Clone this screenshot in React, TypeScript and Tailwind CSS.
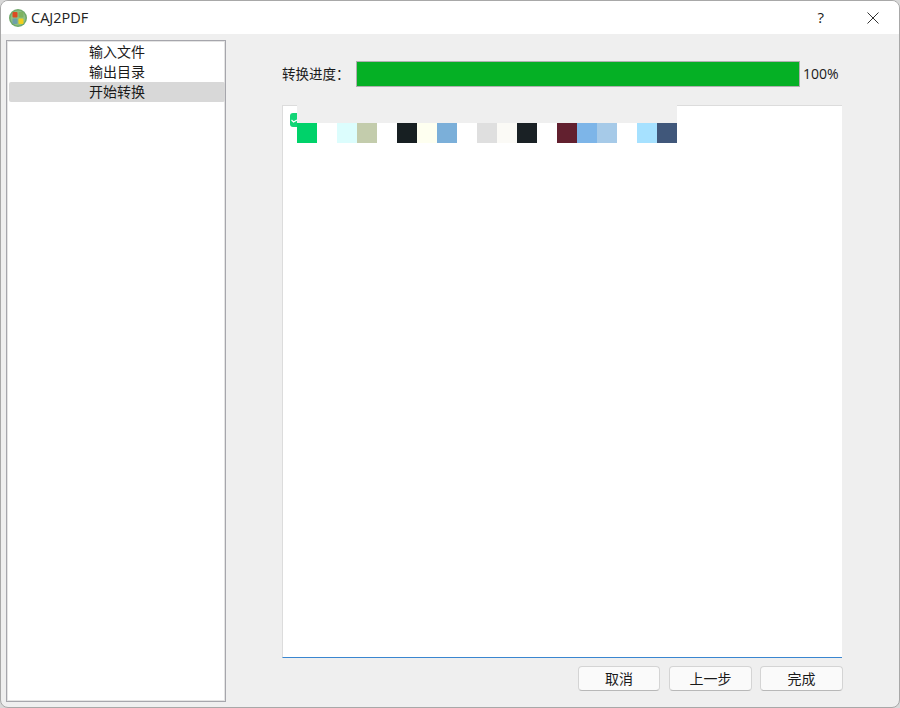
const navItems = ['输入文件', '输出目录', '开始转换']

const swatches = [
  'bg-[#00d26a]', 'bg-white', 'bg-[#dcfdfd]', 'bg-[#c3ccac]', 'bg-white',
  'bg-[#171f22]', 'bg-[#fefff0]', 'bg-[#7bafd9]', 'bg-white', 'bg-[#dfdfdf]',
  'bg-[#fbfaf6]', 'bg-[#1a2125]', 'bg-white', 'bg-[#62202f]', 'bg-[#7db5e8]',
  'bg-[#a6cae8]', 'bg-white', 'bg-[#a6e1ff]', 'bg-[#40577a]',
]

function AppIcon() {
  return (
    <svg width="18" height="18" viewBox="0 0 18 18" className="shrink-0">
      <circle cx="9" cy="9" r="9" fill="#6fa86a" />
      <circle cx="9" cy="9" r="7.5" fill="#8fbf84" />
      <rect x="3.5" y="3" width="5" height="5.5" rx="1" fill="#dd4a22" />
      <rect x="9.5" y="3" width="5" height="5.5" rx="1" fill="#7db35f" />
      <rect x="3.5" y="9.5" width="5" height="5.5" rx="1" fill="#6fa0a8" />
      <rect x="9.5" y="9.5" width="5" height="5.5" rx="1" fill="#f2cf1d" />
    </svg>
  )
}

export default function App() {
  return (
    <div className="w-[900px] h-[708px] overflow-hidden bg-[#d8d8d8] font-['Open_Sans','Noto_Sans_CJK_SC',sans-serif] text-[14px] text-[#1a1a1a]">
      <div className="w-[900px] h-[708px] flex flex-col rounded-lg overflow-hidden border border-[#a8a8a8] bg-[#efefef]">
        <header className="h-[33px] shrink-0 bg-white flex items-center pl-2">
          <AppIcon />
          <span className="ml-1 text-[14.5px] text-[#222]">CAJ2PDF</span>
          <span className="ml-auto mr-[43px] text-[15px]">?</span>
          <svg width="12" height="12" viewBox="0 0 12 12" className="mr-5">
            <path d="M.5.5l11 11M11.5.5l-11 11" stroke="#333" strokeWidth="1" fill="none" />
          </svg>
        </header>

        <div className="flex">
          <aside className="w-[220px] h-[662px] ml-[5px] mt-[6px] shrink-0 bg-white border border-[#a6a6ac] shadow-[inset_0_0_0_1px_#e4e4e4] pl-[2px] pt-[1px]">
            {navItems.map((item, i) => (
              <div key={item} className={`h-5 pb-px flex items-center justify-center rounded-[2px] ${i === 2 ? 'bg-[#d8d8d8]' : ''}`}>
                {item}
              </div>
            ))}
          </aside>

          <main className="ml-[56px] w-[561px] flex flex-col">
            <div className="mt-[27px] h-[26px] flex items-center">
              <span className="w-[74px] shrink-0 text-[13.5px]">转换进度：</span>
              <div className="w-[444px] h-[26px] bg-[#05b025] border border-[#b0b0b0]" />
              <span className="ml-[3px] pb-px">100%</span>
            </div>

            <div className="relative mt-[18px] w-[560px] h-[553px] bg-white border-t border-t-[#dcdcdc] border-l border-l-[#dcdcdc] border-b border-b-[#3a86d0]">
              <div className="-mt-px ml-[14px] w-[380px] h-[18px] bg-[#efefef]" />
              <div className="ml-[14px] flex">
                {swatches.map((color, i) => (
                  <div key={i} className={`w-5 h-5 ${color}`} />
                ))}
              </div>
              <div className="absolute left-[7px] top-[7px] w-[7px] h-[14px] bg-[#12d576] rounded-l-[3px] overflow-hidden">
                <svg width="7" height="14" viewBox="0 0 7 14">
                  <path d="M1.5 7l2 2 3.5-2" stroke="#fff" strokeWidth="1.2" fill="none" />
                </svg>
              </div>
            </div>

            <div className="mt-2 w-[561px] flex justify-end">
              <button className="w-[82px] h-[25px] pb-px rounded bg-[#fafafa] border border-[#d4d4d4] border-b-[#b8b8b8]">取消</button>
              <button className="ml-[9px] w-[83px] h-[25px] pb-px rounded bg-[#fafafa] border border-[#d4d4d4] border-b-[#b8b8b8]">上一步</button>
              <button className="ml-2 w-[83px] h-[25px] pb-px rounded bg-[#fafafa] border border-[#d4d4d4] border-b-[#b8b8b8]">完成</button>
            </div>
          </main>
        </div>
      </div>
    </div>
  )
}
